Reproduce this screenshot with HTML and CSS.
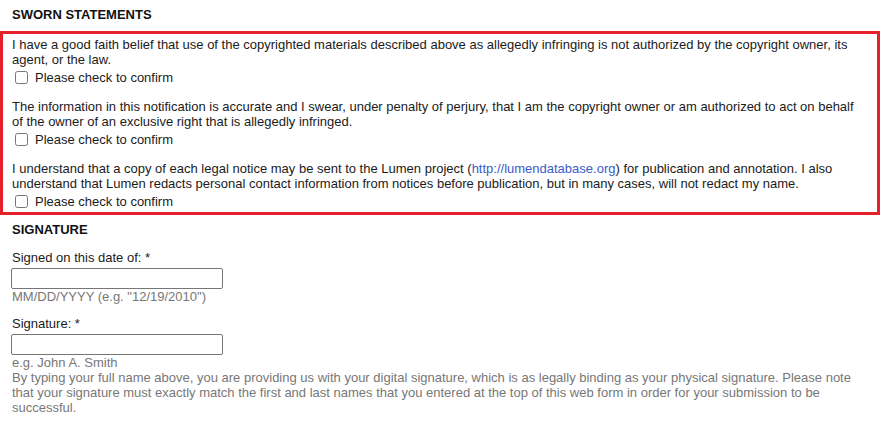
FILE: index.html
```html
<!DOCTYPE html>
<html lang="en">
<head>
<meta charset="UTF-8">
<meta name="viewport" content="width=device-width, initial-scale=1.0">
<title>Sworn statements</title>
<link rel="stylesheet" href="styles.css">
</head>
<body>
  <h3 class="section-title">SWORN STATEMENTS</h3>
  <div class="sworn-box">
    <div class="statement">
      <div class="statement-text">I have a good faith belief that use of the copyrighted materials described above as allegedly infringing is not authorized by the copyright owner, its agent, or the law.</div>
      <label class="confirm-row"><input type="checkbox"> Please check to confirm</label>
    </div>
    <div class="statement">
      <div class="statement-text">The information in this notification is accurate and I swear, under penalty of perjury, that I am the copyright owner or am authorized to act on behalf of the owner of an exclusive right that is allegedly infringed.</div>
      <label class="confirm-row"><input type="checkbox"> Please check to confirm</label>
    </div>
    <div class="statement">
      <div class="statement-text">I understand that a copy of each legal notice may be sent to the Lumen project (<a href="#">http://lumendatabase.org</a>) for publication and annotation. I also understand that Lumen redacts personal contact information from notices before publication, but in many cases, will not redact my name.</div>
      <label class="confirm-row"><input type="checkbox"> Please check to confirm</label>
    </div>
  </div>

  <h3 class="section-title signature-title">SIGNATURE</h3>
  <div class="form-fields">
    <div class="field">
      <label class="field-label">Signed on this date of: *</label>
      <input type="text" class="text-input">
      <div class="hint">MM/DD/YYYY (e.g. "12/19/2010")</div>
    </div>
    <div class="field">
      <label class="field-label">Signature: *</label>
      <input type="text" class="text-input">
      <div class="hint">e.g. John A. Smith</div>
      <div class="hint">By typing your full name above, you are providing us with your digital signature, which is as legally binding as your physical signature. Please note that your signature must exactly match the first and last names that you entered at the top of this web form in order for your submission to be successful.</div>
    </div>
  </div>
</body>
</html>
```

FILE: styles.css
```css
html, body {
  margin: 0;
  padding: 0;
  background: #fff;
  font-family: "Liberation Sans", Arial, sans-serif;
  font-size: 13px;
  line-height: 15px;
  color: #1b1b1b;
}
body {
  padding-top: 7px;
  width: 880px;
}
.section-title {
  font-size: 13px;
  font-weight: bold;
  line-height: 15px;
  margin: 0 0 9px 0;
  padding-left: 12px;
  color: #111;
}
.signature-title {
  margin-top: 7px;
  margin-bottom: 13px;
}
.sworn-box {
  border: 3px solid #e5202a;
  padding: 3px 9px 1px 9px;
}
.statement {
  margin-bottom: 12px;
}
.statement:last-child {
  margin-bottom: 0;
}
.statement a {
  color: #3b5bcc;
  text-decoration: none;
}
.confirm-row {
  display: flex;
  align-items: center;
  margin-top: 1px;
  height: 19px;
}
.confirm-row input {
  width: 13px;
  height: 13px;
  margin: 3px 7px 3px 3px;
}
.form-fields {
  padding: 0 12px;
}
.field + .field {
  margin-top: 12px;
}
.field-label {
  display: block;
}
.text-input {
  display: block;
  box-sizing: border-box;
  width: 212px;
  height: 21px;
  margin: 3px 0 0 -1px;
  border: 1px solid #767676;
  border-radius: 2px;
  padding: 1px 2px;
  font: inherit;
}
.hint {
  color: #777;
}
```
